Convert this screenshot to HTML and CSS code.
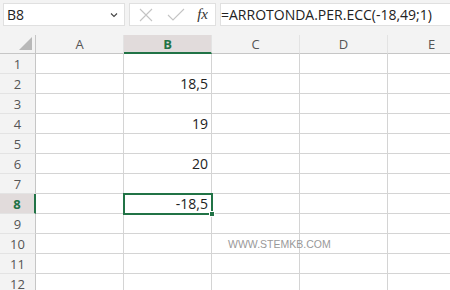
FILE: index.html
```html
<!DOCTYPE html>
<html lang="it">
<head>
    <meta charset="UTF-8">
    <meta name="viewport" content="width=device-width, initial-scale=1.0">
    <title>ARROTONDA.PER.ECC</title>
    <link rel="stylesheet" href="styles.css">
</head>
<body>

    <div class="formula-bar">
        <div class="name-box">
            <span>B8</span>
            <svg class="chevron" width="8" height="6" viewBox="0 0 8 6"><path d="M1 1.5 L4 4.5 L7 1.5" fill="none" stroke="#444" stroke-width="1.1"/></svg>
        </div>
        <div class="tools">
            <svg width="16" height="16" viewBox="0 0 16 16"><path d="M2 2 L14 14 M14 2 L2 14" stroke="#c4c4c4" stroke-width="1.1"/></svg>
            <svg width="18" height="16" viewBox="0 0 18 16"><path d="M1 8 L6 13 L17 2" fill="none" stroke="#c4c4c4" stroke-width="1.1"/></svg>
            <span class="fx">fx</span>
        </div>
        <div class="formula-input">=ARROTONDA.PER.ECC(-18,49;1)</div>
    </div>

    <div class="sheet-wrap">
        <div class="sheet">
            <div class="corner"><span class="triangle"></span></div>
            <div class="col-head">A</div>
            <div class="col-head active">B</div>
            <div class="col-head">C</div>
            <div class="col-head">D</div>
            <div class="col-head">E</div>

            <div class="row-head">1</div><div class="cell"></div><div class="cell"></div><div class="cell"></div><div class="cell"></div><div class="cell"></div>
            <div class="row-head">2</div><div class="cell"></div><div class="cell num">18,5</div><div class="cell"></div><div class="cell"></div><div class="cell"></div>
            <div class="row-head">3</div><div class="cell"></div><div class="cell"></div><div class="cell"></div><div class="cell"></div><div class="cell"></div>
            <div class="row-head">4</div><div class="cell"></div><div class="cell num">19</div><div class="cell"></div><div class="cell"></div><div class="cell"></div>
            <div class="row-head">5</div><div class="cell"></div><div class="cell"></div><div class="cell"></div><div class="cell"></div><div class="cell"></div>
            <div class="row-head">6</div><div class="cell"></div><div class="cell num">20</div><div class="cell"></div><div class="cell"></div><div class="cell"></div>
            <div class="row-head">7</div><div class="cell"></div><div class="cell"></div><div class="cell"></div><div class="cell"></div><div class="cell"></div>
            <div class="row-head active">8</div><div class="cell"></div><div class="cell num selected">-18,5<span class="handle"></span></div><div class="cell"></div><div class="cell"></div><div class="cell"></div>
            <div class="row-head">9</div><div class="cell"></div><div class="cell"></div><div class="cell"></div><div class="cell"></div><div class="cell"></div>
            <div class="row-head">10</div><div class="cell"></div><div class="cell"></div><div class="cell watermark">WWW.STEMKB.COM</div><div class="cell"></div><div class="cell"></div>
            <div class="row-head">11</div><div class="cell"></div><div class="cell"></div><div class="cell"></div><div class="cell"></div><div class="cell"></div>
            <div class="row-head">12</div><div class="cell"></div><div class="cell"></div><div class="cell"></div><div class="cell"></div><div class="cell"></div>
        </div>
    </div>

</body>
</html>
```

FILE: styles.css
```css
:root {
    --green: #217346;
    --grid: #d4d4d4;
    --head-bg: #f3f3f3;
    --head-active: #e1dbdb;
    --text: #222;
}

* {
    margin: 0;
    padding: 0;
    box-sizing: border-box;
}

body {
    width: 450px;
    height: 290px;
    overflow: hidden;
    background-color: #fff;
    color: var(--text);
    font-family: 'Open Sans', 'Noto Sans', sans-serif;
}

/* barra della formula */
.formula-bar {
    display: flex;
    gap: 4px;
    height: 35px;
    padding: 3px 0 9px 3px;
    background-color: var(--head-bg);
}

.name-box,
.tools,
.formula-input {
    background-color: #fff;
    border: 1px solid #e0e0e0;
    height: 23px;
}

.name-box {
    width: 122px;
    display: flex;
    align-items: center;
    justify-content: space-between;
    padding: 0 6px 0 3px;
    font-size: 14px;
}

.tools {
    width: 87px;
    display: flex;
    align-items: center;
    justify-content: space-between;
    padding: 0 7px 0 8px;
}

.fx {
    font-family: 'Liberation Serif', serif;
    font-style: italic;
    font-size: 15px;
    color: #333;
}

.formula-input {
    flex: 1;
    min-width: 0;
    border-right: none;
    font-size: 14px;
    line-height: 21px;
    white-space: nowrap;
    overflow: hidden;
}

/* foglio */
.sheet-wrap {
    width: 450px;
    overflow: hidden;
}

.sheet {
    display: grid;
    grid-template-columns: 36px repeat(5, 88px);
    grid-template-rows: 19px repeat(12, 20px);
    width: 476px;
}

.corner,
.col-head,
.row-head {
    background-color: var(--head-bg);
    color: #555;
    font-size: 13px;
    border-right: 1px solid var(--grid);
    border-bottom: 1px solid var(--grid);
    display: flex;
    align-items: center;
    justify-content: center;
}

.col-head {
    border-right-color: #e3e3e3;
    border-bottom-color: #c6c6c6;
}

.row-head {
    border-right-color: #c6c6c6;
    border-bottom-color: #e3e3e3;
}

.corner {
    position: relative;
    border-bottom-color: #c6c6c6;
    border-right-color: #c6c6c6;
}

.triangle {
    position: absolute;
    right: 3px;
    bottom: 3px;
    width: 0;
    height: 0;
    border-left: 13px solid transparent;
    border-bottom: 13px solid #b8b8b8;
}

.col-head.active {
    background-color: var(--head-active);
    color: var(--green);
    font-weight: bold;
    border-bottom: 2px solid var(--green);
}

.row-head.active {
    background-color: var(--head-active);
    color: var(--green);
    font-weight: bold;
    border-right: 2px solid var(--green);
}

.cell {
    border-right: 1px solid var(--grid);
    border-bottom: 1px solid var(--grid);
    font-size: 14px;
    display: flex;
    align-items: center;
    white-space: nowrap;
}

.num {
    justify-content: flex-end;
    padding-right: 3px;
}

.selected {
    position: relative;
    outline: 2px solid var(--green);
    outline-offset: -1px;
}

.handle {
    position: absolute;
    right: -4px;
    bottom: -4px;
    width: 6px;
    height: 6px;
    background-color: var(--green);
    border: 1px solid #fff;
}

.watermark {
    overflow: visible;
    padding-left: 16px;
    font-family: 'Liberation Sans', sans-serif;
    font-size: 10.5px;
    letter-spacing: 0;
    color: #999;
}
```
